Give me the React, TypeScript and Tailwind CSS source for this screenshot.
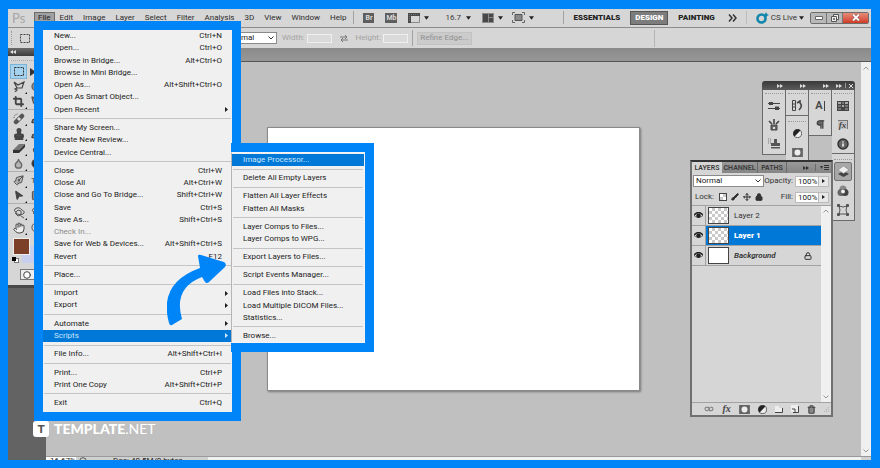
import { type ReactNode } from "react";
import {
  Brush,
  Circle,
  Crop,
  Droplet,
  Hand,
  Info,
  Link,
  Lock,
  MousePointer2,
  Move,
  PenTool,
  Pilcrow,
  Stamp,
  StickyNote,
  Trash2,
} from "lucide-react";

type Entry = { label: string; keys?: string; sub?: boolean; off?: boolean; on?: boolean } | null;

const fileMenu: Entry[] = [
  { label: "New...", keys: "Ctrl+N" },
  { label: "Open...", keys: "Ctrl+O" },
  { label: "Browse in Bridge...", keys: "Alt+Ctrl+O" },
  { label: "Browse in Mini Bridge..." },
  { label: "Open As...", keys: "Alt+Shift+Ctrl+O" },
  { label: "Open As Smart Object..." },
  { label: "Open Recent", sub: true },
  null,
  { label: "Share My Screen..." },
  { label: "Create New Review..." },
  { label: "Device Central..." },
  null,
  { label: "Close", keys: "Ctrl+W" },
  { label: "Close All", keys: "Alt+Ctrl+W" },
  { label: "Close and Go To Bridge...", keys: "Shift+Ctrl+W" },
  { label: "Save", keys: "Ctrl+S" },
  { label: "Save As...", keys: "Shift+Ctrl+S" },
  { label: "Check In...", off: true },
  { label: "Save for Web & Devices...", keys: "Alt+Shift+Ctrl+S" },
  { label: "Revert", keys: "F12" },
  null,
  { label: "Place..." },
  null,
  { label: "Import", sub: true },
  { label: "Export", sub: true },
  null,
  { label: "Automate", sub: true },
  { label: "Scripts", sub: true, on: true },
  null,
  { label: "File Info...", keys: "Alt+Shift+Ctrl+I" },
  null,
  { label: "Print...", keys: "Ctrl+P" },
  { label: "Print One Copy", keys: "Alt+Shift+Ctrl+P" },
  null,
  { label: "Exit", keys: "Ctrl+Q" },
];

const scriptsMenu: Entry[] = [
  { label: "Image Processor...", on: true },
  null,
  { label: "Delete All Empty Layers" },
  null,
  { label: "Flatten All Layer Effects" },
  { label: "Flatten All Masks" },
  null,
  { label: "Layer Comps to Files..." },
  { label: "Layer Comps to WPG..." },
  null,
  { label: "Export Layers to Files..." },
  null,
  { label: "Script Events Manager..." },
  null,
  { label: "Load Files into Stack..." },
  { label: "Load Multiple DICOM Files..." },
  { label: "Statistics..." },
  null,
  { label: "Browse..." },
];

function Menu({ items, name }: { items: Entry[]; name: string }) {
  return (
    <div role="menu" aria-label={name} className="flex min-h-0 flex-1 flex-col">
      {items.map((item, i) =>
        item ? (
          <button
            key={i}
            role="menuitem"
            disabled={item.off}
            className={`flex min-h-0 w-full flex-1 items-center justify-between pr-[10px] pl-[11px] text-left leading-[12px] ${
              item.on ? "bg-[#0078d7] text-[#cfe6fb]" : item.off ? "text-[#8a8a8a]" : "text-[#1c1c1c]"
            }`}
          >
            <span>{item.label}</span>
            {item.keys && <span>{item.keys}</span>}
            {item.sub && (
              <svg viewBox="0 0 3 5" className="-mr-[6px] h-[5px] w-[3px]" fill="currentColor">
                <path d="M0 0L3 2.500L0 5Z" />
              </svg>
            )}
          </button>
        ) : (
          <div key={i} role="separator" className="flex h-[6px] shrink-0 items-center px-px">
            <div className="h-px w-full bg-[#c4c4c4]" />
          </div>
        ),
      )}
    </div>
  );
}

function Down() {
  return (
    <svg viewBox="0 0 6 4" className="h-[4px] w-[5px] shrink-0" fill="#222">
      <path d="M0 0H6L3 4Z" />
    </svg>
  );
}

function Fast({ className = "" }: { className?: string }) {
  return (
    <svg viewBox="0 0 6 4" className={`h-[4px] w-[6px] shrink-0 ${className}`} fill="currentColor">
      <path d="M0 0L3 2L0 4ZM3 0L6 2L3 4Z" />
    </svg>
  );
}

function Chevron({ up = false }: { up?: boolean }) {
  return (
    <svg viewBox="0 0 6 4" className="h-[4px] w-[6px] shrink-0" fill="none" stroke="currentColor">
      <path d={up ? "M.5 3.5L3 1L5.5 3.5" : "M.5 .5L3 3L5.5 .5"} />
    </svg>
  );
}

function Rule() {
  return <div className="h-[13px] w-px shrink-0 bg-[#a2a2a2]" />;
}

function MenuBar() {
  const names = ["Edit", "Image", "Layer", "Select", "Filter", "Analysis", "3D", "View", "Window", "Help"];
  return (
    <header className="flex h-[19px] shrink-0 items-center border-b border-[#8c8c8c] bg-[#d6d6d6] pr-[2px] pb-px pl-[4px] leading-[10px] whitespace-nowrap">
      <div className="w-[22px] font-[Lato,sans-serif] text-[13px] leading-[14px] text-[#a6a6a6]">Ps</div>
      <nav className="flex items-center">
        <button className="h-[12px] border border-[#6c6c6c] bg-[#a0a0a0] px-[3px] text-[#222]">File</button>
        {names.map((n) => (
          <button key={n} className="h-[12px] px-[5px] text-[#2c2c2c]">
            {n}
          </button>
        ))}
      </nav>
      <div className="ml-[2px] flex items-center">
        <Rule />
        <button className="ml-[9px] h-[10px] w-[11px] bg-[#5e5e5e] text-center text-[7px] font-bold text-[#d8d8d8]">Br</button>
        <button className="ml-[11px] h-[10px] w-[12px] bg-[#5e5e5e] text-center text-[7px] font-bold text-[#d8d8d8]">Mb</button>
        <button aria-label="View extras" className="ml-[11px] flex items-center gap-[4px]">
          <svg viewBox="0 0 12 10" className="h-[10px] w-[12px]">
            <path d="M0 0H12V3H3V10H0Z" fill="#4a4a4a" />
            <path d="M3 9.5H11.500V3" fill="none" stroke="#8a8a8a" />
            <path d="M1 1.500H11M1.500 3V9" stroke="#777" strokeDasharray="1 1" />
          </svg>
          <Down />
        </button>
        <button className="ml-[16px] flex items-center gap-[5px] text-[#3a3a3a]">
          16.7 <Down />
        </button>
        <button aria-label="Arrange documents" className="ml-[11px] flex items-center gap-[4px]">
          <svg viewBox="0 0 12 10" className="h-[10px] w-[12px]">
            <path d="M0 0H12V10H0Z" fill="#8a8a8a" />
            <path d="M1 1H6V9H1ZM7 1H11V4H7ZM7 5H11V9H7Z" fill="#484848" />
          </svg>
          <Down />
        </button>
        <button aria-label="Screen mode" className="ml-[9px] flex items-center gap-[4px]">
          <svg viewBox="0 0 13 11" className="h-[11px] w-[13px]">
            <path d="M3 2.500H10V8.500H3Z" fill="#8a8a8a" stroke="#555" />
            <path d="M.5 3V.5H3M10 .5H12.500V3M.5 8V10.500H3M10 10.500H12.500V8" fill="none" stroke="#666" />
          </svg>
          <Down />
        </button>
      </div>
      <div className="ml-auto flex items-center">
        <Rule />
        <button className="ml-[10px] font-black text-[#222]">ESSENTIALS</button>
        <button className="mx-[10px] h-[14px] w-[38px] border border-[#555] bg-[#7c7c7c] font-black text-white">
          DESIGN
        </button>
        <button className="font-black text-[#222]">PAINTING</button>
        <svg viewBox="0 0 9 8" className="ml-[13px] h-[8px] w-[9px]" fill="none" stroke="#333" strokeWidth="1.500">
          <path d="M1 .5L4 4L1 7.500M5 .5L8 4L5 7.500" />
        </svg>
        <div className="ml-[9px] h-[13px] w-px bg-[#bdbdbd]" />
        <button className="ml-[9px] flex items-center gap-[2px] text-[#333]">
          <svg viewBox="0 0 13 12" className="h-[12px] w-[13px]">
            <circle cx="5.500" cy="6.500" r="4" fill="none" stroke="#1287ab" strokeWidth="2.600" />
            <path d="M10 0L11 2L13 3L11 4L10 6L9 4L7 3L9 2Z" fill="#1287ab" />
          </svg>
          CS Live
          <Down />
        </button>
        <div className="ml-[6px] flex h-[12px] overflow-hidden rounded-[2px] border border-[#6d6d6d]">
          <button aria-label="Minimize" className="flex w-[16px] items-center justify-center border-r border-[#777] bg-[#b8b8b8]">
            <svg viewBox="0 0 8 4" className="h-[4px] w-[8px]">
              <path d="M.5 .5H7.500V3.500H.5Z" fill="#fff" stroke="#666" />
            </svg>
          </button>
          <button aria-label="Restore" className="flex w-[16px] items-center justify-center border-r border-[#777] bg-[#b8b8b8]">
            <svg viewBox="0 0 8 8" className="h-[8px] w-[8px]" fill="#eee" stroke="#555">
              <path d="M2.500 .5H7.500V5.500H2.500Z" />
              <path d="M.5 2.500H5.500V7.500H.5Z" />
              <path d="M2.500 4.500H3.500V5.500H2.500Z" />
            </svg>
          </button>
          <button aria-label="Close window" className="flex w-[25px] items-center justify-center bg-linear-to-b from-[#e58a7a] to-[#cf3a22]">
            <svg viewBox="0 0 8 7" className="h-[7px] w-[8px]" fill="none">
              <path d="M1 .5L7 6.500M7 .5L1 6.500" stroke="#7c3a33" strokeWidth="3" />
              <path d="M1 .5L7 6.500M7 .5L1 6.500" stroke="#fff" strokeWidth="2" />
            </svg>
          </button>
        </div>
      </div>
    </header>
  );
}

function OptionsBar() {
  return (
    <div className="flex h-[20px] shrink-0 items-center bg-[#d6d6d6] text-[#a3a3a3]">
      <div className="ml-[3px] h-[14px] border-l border-dotted border-[#999]" />
      <button aria-label="Rectangular marquee" className="ml-[8px]">
        <svg viewBox="0 0 10 9" className="h-[9px] w-[10px]" fill="none" stroke="#444" strokeDasharray="2 1">
          <path d="M.5 .5H9.500V8.500H.5Z" />
        </svg>
      </button>
      <div className="relative ml-[195px] h-[12px] w-[52px]">
        <select aria-label="Style" className="block h-full w-full appearance-none border border-[#8a8a8a] bg-white pl-[2px] leading-[10px] text-[#222]">
          <option>Normal</option>
        </select>
        <div className="pointer-events-none absolute top-[4px] right-[3px] text-[#333]">
          <Chevron />
        </div>
      </div>
      <label className="ml-[5px] flex items-center gap-[2px]">
        Width:
        <input disabled className="h-[9px] w-[25px] border border-[#efefef] bg-[#dadada]" />
      </label>
      <svg viewBox="0 0 8 7" className="mx-[8px] h-[7px] w-[8px]" fill="none" stroke="#777">
        <path d="M0 2H7M5 0L7 2L5 4M8 5H1M3 3L1 5L3 7" />
      </svg>
      <label className="flex items-center gap-[2px]">
        Height:
        <input disabled className="h-[9px] w-[25px] border border-[#efefef] bg-[#dadada]" />
      </label>
      <div className="ml-[4px] h-[16px] w-px bg-[#a2a2a2]" />
      <button disabled className="ml-[4px] h-[13px] w-[55px] border border-[#c2c2c2] bg-[#cbcbcb] leading-[10px] text-[#909090]">
        Refine Edge...
      </button>
      <div className="mr-[216px] ml-auto h-[17px] w-px bg-[#b4b4b4]" />
    </div>
  );
}

const ic = "size-[11px] fill-[#8a8a8a]";

const lasso = (
  <svg viewBox="0 0 12 11" className="h-[11px] w-[12px]" fill="none" stroke="#444" strokeWidth="1.200">
    <path d="M1 1L5 4L11 1L9 7H4L1 1M4 7L2 8L4 9L2 11" />
  </svg>
);
const heal = (
  <svg viewBox="0 0 12 12" className="h-[12px] w-[12px]">
    <path d="M3 9L9 3" stroke="#555" strokeWidth="4.500" strokeLinecap="round" />
    <path d="M5 7L7 5" stroke="#ddd" strokeWidth="3" />
    <path d="M1 5Q1 1 5 1" stroke="#555" fill="none" strokeDasharray="1 1" />
  </svg>
);
const eraser = (
  <svg viewBox="0 0 12 9" className="h-[9px] w-[12px]">
    <path d="M0 6L6 0H12L6 6Z" fill="#777" />
    <path d="M0 6H6V9H0ZM6 6L12 0V3L6 9Z" fill="#333" />
  </svg>
);
const orbit = (
  <svg viewBox="0 0 12 12" className="h-[12px] w-[12px]" fill="none" stroke="#555">
    <path d="M3 5Q0 4 2 2Q6 -1 9 3Q13 5 10 7Q6 9 2 6M5 3L8 4V8L5 9L3 7V5ZM8 9L11 11" />
  </svg>
);

const tools: { name: string; icon: ReactNode; second: ReactNode; rule?: boolean }[] = [
  { name: "Lasso", icon: lasso, second: <Circle className={ic} /> },
  { name: "Crop", icon: <Crop className="size-[11px]" strokeWidth={4} />, second: <PenTool className={ic} />, rule: true },
  { name: "Healing brush", icon: heal, second: <Brush className={ic} strokeWidth={3} /> },
  { name: "Clone stamp", icon: <Stamp className="size-[12px] fill-[#555]" strokeWidth={4} />, second: <Brush className={ic} strokeWidth={3} /> },
  { name: "Eraser", icon: eraser, second: <Droplet className={ic} /> },
  { name: "Blur", icon: <Droplet className="size-[11px] fill-[#b4b4b4] text-[#666]" strokeWidth={3} />, second: <Circle className="size-[11px] fill-[#333]" />, rule: true },
  { name: "Pen", icon: <PenTool className="size-[11px] rotate-90 fill-[#c4c4c4]" strokeWidth={2} />, second: <span>T</span> },
  { name: "Path selection", icon: <MousePointer2 className="size-[11px] rotate-12 fill-[#444]" />, second: <StickyNote className={ic} />, rule: true },
  { name: "3D rotate", icon: orbit, second: orbit },
  { name: "Hand", icon: <Hand className="size-[12px] fill-[#eee]" strokeWidth={2} />, second: <Circle className="size-[11px]" /> },
];

function Toolbox() {
  return (
    <aside className="w-[38px] shrink-0 bg-[#636363]">
      <div className="flex h-[8px] items-center bg-linear-to-b from-[#6a6a6a] to-[#3c3c3c] pl-[2px] text-[#e0e0e0]">
        <Fast className="rotate-180" />
      </div>
      <div className="bg-[#d6d6d6] pb-[5px] text-[#444]">
        <div className="ml-[3px] h-[5px] border-b border-dotted border-[#aaa]" />
        <div className="mt-[3px] flex items-center gap-[3px] pl-[2px]">
          <button aria-label="Marquee" className="flex h-[15px] w-[17px] items-center justify-center border border-[#7db4d6] bg-[#a5d2ee]">
            <svg viewBox="0 0 10 9" className="h-[9px] w-[10px]" fill="none" stroke="#333" strokeDasharray="2 1">
              <path d="M.5 .5H9.500V8.500H.5Z" />
            </svg>
          </button>
          <svg viewBox="0 0 6 8" className="h-[8px] w-[6px]" fill="#333">
            <path d="M0 0L6 4L0 8Z" />
          </svg>
        </div>
        {tools.map((t) => (
          <div key={t.name} className={t.rule ? "mb-px border-b border-[#b0b0b0]" : ""}>
            <div className="flex h-[15px] items-center gap-[6px] pl-[4px]">
              <button aria-label={t.name} className="relative flex h-[14px] w-[13px] shrink-0 items-center justify-center">
                {t.icon}
                <svg viewBox="0 0 2 2" className="absolute right-[-2px] bottom-0 size-[2px]">
                  <path d="M2 0V2H0Z" fill="#111" />
                </svg>
              </button>
              {t.second}
            </div>
          </div>
        ))}
        <div className="relative mt-[3px] h-[27px]">
          <div className="absolute top-[8px] left-[14px] h-[17px] w-[17px] bg-[#c6d0ee]" />
          <div className="absolute top-0 left-[5px] h-[17px] w-[17px] border border-[#eee] bg-[#7c4029]" />
          <div className="absolute top-[20px] left-[6px] h-[5px] w-[5px] border border-[#777] bg-white" />
          <div className="absolute top-[19px] left-[4px] h-[4px] w-[4px] bg-black" />
        </div>
        <button aria-label="Quick mask" className="mt-[4px] ml-[12px] flex h-[11px] w-[22px] items-center border border-[#777] bg-[#eee] pl-[2px]">
          <Circle className="size-[8px] fill-white" strokeWidth={3} />
        </button>
      </div>
      <div className="h-[3px] bg-[#484848]" />
    </aside>
  );
}

const brushes = (
  <svg viewBox="0 0 12 10" className="h-[10px] w-[12px]" stroke="#444" fill="#444">
    <path d="M0 2.500H12M0 7.500H12" strokeWidth="1.200" />
    <path d="M1 1H5V4H1ZM7 5.500H11V9H7Z" stroke="none" />
  </svg>
);
const pots = (
  <svg viewBox="0 0 12 12" className="h-[12px] w-[12px]" stroke="#444" fill="none">
    <path d="M3 6H9V11H3Z" fill="#666" />
    <path d="M4 5L1 2M6 5V0M8 5L11 2" strokeWidth="1.600" />
    <path d="M5 8H7V10H5Z" fill="#ddd" stroke="none" />
  </svg>
);
const clone = (
  <svg viewBox="0 0 12 11" className="h-[11px] w-[12px]">
    <path d="M0 1H4M0 3H4M0 5H4" stroke="#777" strokeDasharray="1 1" />
    <path d="M6 1H9V5H12V8H3V5H6ZM3 9H12V10.500H3Z" fill="#555" />
  </svg>
);
const history = (
  <svg viewBox="0 0 12 11" className="h-[11px] w-[12px]" fill="none" stroke="#444">
    <path d="M1.500 .5H4.500V10.500H1.500ZM1.500 4H4.500M1.500 7H4.500" />
    <path d="M6 3L9 1V3Q12 6 8 10" strokeWidth="1.600" />
  </svg>
);
const charIcon = <span className="border-r border-[#444] pr-px text-[11px] leading-[10px] font-semibold">A</span>;
const swatches = (
  <svg viewBox="0 0 12 10" className="h-[10px] w-[12px]">
    <path d="M0 0H12V10H0Z" fill="#444" />
    <path d="M1 1H4V3H1ZM5 4H7V6H5ZM8 1H11V3H8Z" fill="#aaa" />
    <path d="M5 1H7V3H5ZM1 4H4V6H1ZM8 4H11V6H8ZM1 7H4V9H1ZM8 7H11V9H8Z" fill="#777" />
  </svg>
);
const styles = (
  <span className="border-t border-r border-[#777] bg-[#c4c4c4] px-px font-[Liberation_Serif,serif] text-[9px] leading-[8px] font-bold italic">fx</span>
);
const mask = (
  <svg viewBox="0 0 12 10" className="h-[9px] w-[11px]">
    <path d="M0 0H12V10H0Z" fill="#666" />
    <circle cx="6" cy="5" r="3.300" fill="#eee" />
  </svg>
);
const halfDisc = (
  <svg viewBox="0 0 10 10" className="size-[9px]">
    <circle cx="5" cy="5" r="4.500" fill="#eee" stroke="#555" />
    <path d="M8.200 1.800A4.500 4.500 0 0 0 1.800 8.200Z" fill="#222" />
  </svg>
);
const layersIcon = (
  <svg viewBox="0 0 13 13" className="h-[13px] w-[13px]">
    <path d="M1 9L6.500 6L12 9L6.500 12Z" fill="#444" />
    <path d="M1 5L6.500 1L12 5L6.500 8.500Z" fill="#eee" stroke="#777" strokeWidth=".5" />
  </svg>
);
const channels = (
  <svg viewBox="0 0 12 12" className="h-[12px] w-[12px]">
    <circle cx="6" cy="4" r="3.500" fill="#888" />
    <circle cx="4" cy="7.500" r="3.500" fill="#666" />
    <circle cx="8" cy="7.500" r="3.500" fill="#444" />
    <circle cx="6" cy="6.500" r="2" fill="#eee" />
  </svg>
);
const paths = (
  <svg viewBox="0 0 12 12" className="h-[12px] w-[12px]" stroke="#555" fill="none">
    <path d="M2 2Q6 4 10 2Q8 6 10 10M2 10Q4 6 2 2M3 10H9" />
    <path d="M.5 .5H2.500V2.500H.5ZM9.500 .5H11.500V2.500H9.500ZM.5 9.500H2.500V11.500H.5ZM9.500 9.500H11.500V11.500H9.500Z" fill="#555" />
  </svg>
);

type DockItem = { name: string; icon: ReactNode; active?: boolean };

const dock: DockItem[][][] = [
  [[{ name: "Brush presets", icon: brushes }, { name: "Brushes", icon: pots }, { name: "Clone source", icon: clone }]],
  [
    [{ name: "History", icon: history }],
    [
      { name: "Adjustments", icon: halfDisc },
      { name: "Masks", icon: mask },
    ],
  ],
  [[{ name: "Character", icon: charIcon }, { name: "Paragraph", icon: <Pilcrow className="size-[11px] fill-[#666]" strokeWidth={3} /> }]],
  [
    [
      { name: "Swatches", icon: swatches },
      { name: "Styles", icon: styles },
      { name: "Info", icon: <Info className="size-[12px] fill-[#666] text-[#333] [&>path]:stroke-white" strokeWidth={3} /> },
    ],
    [
      { name: "Layers panel", icon: layersIcon, active: true },
      { name: "Channels panel", icon: channels },
      { name: "Paths panel", icon: paths },
    ],
  ],
];

function Dock() {
  return (
    <div className="absolute top-[19px] right-[6px] w-[93px] text-[#444]">
      <div className="flex h-[9px] items-center rounded-t-[3px] bg-linear-to-b from-[#3a3a3a] to-[#5c5c5c] text-[#ddd]">
        <div className="flex w-[23px] justify-end pr-[2px]"><Fast /></div>
        <div className="flex w-[23px] justify-end pr-[2px]"><Fast /></div>
        <div className="flex w-[23px] justify-end pr-[2px]"><Fast /></div>
        <div className="flex flex-1 items-center justify-end gap-[3px] pr-[2px]">
          <Fast />
          <span className="h-[5px] w-px bg-[#999]" />
          <svg viewBox="0 0 4 4" className="size-[4px]" stroke="currentColor"><path d="M0 0L4 4M4 0L0 4" /></svg>
        </div>
      </div>
      <div className="flex items-start">
        {dock.map((column, c) => (
          <div key={c} className={`min-w-0 flex-1 border-r border-b border-[#6a6a6a] bg-[#d6d6d6] pb-px ${c ? "" : "border-l"}`}>
            {column.map((group, g) => (
              <div key={g} className={g ? "border-t border-[#6a6a6a] pt-[2px]" : ""}>
                <div className="mx-[2px] h-[4px] border-b border-dotted border-[#999]" />
                <div className="flex flex-col items-center pt-[2px]">
                  {group.map((d) => (
                    <button
                      key={d.name}
                      aria-label={d.name}
                      className={`flex h-[19px] w-[18px] items-center justify-center ${
                        d.active ? "rounded-[2px] border border-[#6f6f6f] bg-[#a8a8a8]" : ""
                      }`}
                    >
                      {d.icon}
                    </button>
                  ))}
                </div>
              </div>
            ))}
          </div>
        ))}
      </div>
    </div>
  );
}

function Eye() {
  return (
    <svg viewBox="0 0 9 7" className="h-[7px] w-[9px]">
      <path d="M0 3.500Q4.500 -2 9 3.500Q4.500 7 0 3.500Z" fill="#ddd" stroke="#555" strokeWidth=".8" />
      <path d="M0 3Q4.500 -2 9 3" fill="none" stroke="#222" strokeWidth="1.400" />
      <circle cx="4.500" cy="3.800" r="2.300" fill="#222" />
    </svg>
  );
}

const checker = "bg-[repeating-conic-gradient(#c9c9c9_0_25%,#fff_0_50%)] bg-[length:6px_6px]";

function Percent({ label }: { label: string }) {
  return (
    <label className="flex items-center gap-[2px]">
      {label}
      <span className="flex">
        <input defaultValue="100%" className="h-[11px] w-[24px] border border-[#bbb] bg-white pl-[2px] text-[#222]" />
        <span className="flex h-[11px] w-[10px] items-center justify-center border border-l-0 border-[#bbb] bg-[#e8e8e8]">
          <svg viewBox="0 0 3 4" className="h-[4px] w-[3px]" fill="#222"><path d="M0 0L3 2L0 4Z" /></svg>
        </span>
      </span>
    </label>
  );
}

function LayersPanel() {
  const rows = [
    { name: "Layer 2", thumb: checker, row: "", text: "" },
    { name: "Layer 1", thumb: checker, row: "bg-[#0078d7]", text: "font-black text-white" },
    { name: "Background", thumb: "bg-white", row: "", text: "italic font-semibold" },
  ];
  return (
    <section className="absolute top-[98px] right-[28px] flex h-[257px] w-[143px] flex-col border-[2px] border-[#707070] border-t-[#333] bg-[#d6d6d6] leading-[10px] text-[#333]">
      <div className="flex h-[11px] shrink-0 items-center bg-linear-to-b from-[#999] to-[#858585] text-[7px] font-semibold text-[#3a3a3a]">
        <button className="h-full w-[30px] bg-[#d6d6d6]">LAYERS</button>
        <button className="h-full w-[36px] border-r border-[#6a6a6a]">CHANNEL</button>
        <button className="h-full w-[29px] border-r border-[#6a6a6a]">PATHS</button>
        <Fast className="mr-[6px] ml-auto text-[#333]" />
        <span className="mr-[4px] h-[7px] w-px bg-[#6a6a6a]" />
        <svg viewBox="0 0 9 5" className="mr-[2px] h-[5px] w-[9px]">
          <path d="M0 1H3L1.500 4Z" fill="#333" />
          <path d="M4 .5H9M4 2.500H9M4 4.500H9" stroke="#333" />
        </svg>
      </div>
      <div className="flex h-[16px] shrink-0 items-center justify-between pr-[2px] pl-px">
        <div className="relative h-[12px] w-[74px]">
          <select aria-label="Blend mode" className="block h-full w-full appearance-none border border-[#8a8a8a] bg-white pl-[2px] leading-[10px] text-[#222]">
            <option>Normal</option>
          </select>
          <div className="pointer-events-none absolute top-[4px] right-[3px]"><Chevron /></div>
        </div>
        <Percent label="Opacity:" />
      </div>
      <div className="flex h-[16px] shrink-0 items-center pr-[2px] pl-[3px]">
        <span className="mr-[5px]">Lock:</span>
        <div className="flex items-center gap-[4px]">
          <button aria-label="Lock transparency" className={`size-[8px] border border-[#444] ${checker}`} />
          <button aria-label="Lock pixels"><Brush className="size-[8px] fill-[#333]" strokeWidth={3} /></button>
          <button aria-label="Lock position"><Move className="size-[8px]" strokeWidth={3} /></button>
          <button aria-label="Lock all"><Lock className="size-[8px] fill-[#333]" strokeWidth={3} /></button>
        </div>
        <div className="ml-auto"><Percent label="Fill:" /></div>
      </div>
      <div className="flex flex-1 border-y border-[#a2a2a2]">
        <ul className="flex-1">
          {rows.map((r) => (
            <li key={r.name} className="flex h-[20px] items-stretch border-b border-[#a2a2a2]">
              <button aria-label={`Show ${r.name}`} className="flex w-[14px] items-center justify-center border-r border-[#a2a2a2]">
                <Eye />
              </button>
              <div className={`flex flex-1 items-center gap-[5px] pl-[2px] ${r.row}`}>
                <div className={`h-[17px] w-[21px] border border-[#444] ${r.thumb}`} />
                <span className={r.text}>{r.name}</span>
                {r.name === "Background" && <Lock className="mr-[9px] ml-auto size-[8px]" strokeWidth={3} />}
              </div>
            </li>
          ))}
        </ul>
        <div className="flex w-[10px] flex-col items-center justify-between bg-[#f0f0f0] py-[3px] text-[#999]">
          <Chevron up />
          <Chevron />
        </div>
      </div>
      <div className="flex h-[12px] shrink-0 items-center gap-[8px] pl-[12px] text-[#444]">
        <button aria-label="Link layers"><Link className="h-[8px] w-[10px] rotate-45 text-[#777]" strokeWidth={3} /></button>
        <button aria-label="Layer style" className="w-[10px] font-[Liberation_Serif,serif] text-[10px] font-bold italic">fx</button>
        <button aria-label="Add mask">{mask}</button>
        <button aria-label="Adjustment layer">{halfDisc}</button>
        <button aria-label="New group">
          <svg viewBox="0 0 8 7" className="h-[7px] w-[8px]">
            <path d="M0 0H4V2H8V7H0Z" fill="#eee" />
            <path d="M0 6.500H7.500V2" fill="none" stroke="#444" />
          </svg>
        </button>
        <button aria-label="New layer">
          <svg viewBox="0 0 8 8" className="size-[8px]">
            <path d="M0 0H7V7H0Z" fill="#eee" />
            <path d="M2 7.500H7.500V1M1 4H4V8" fill="none" stroke="#444" />
          </svg>
        </button>
        <button aria-label="Delete layer"><Trash2 className="size-[9px] fill-[#888]" strokeWidth={3} /></button>
        <svg viewBox="0 0 6 6" className="mr-px ml-auto size-[6px]" stroke="#aaa" strokeDasharray="1 1">
          <path d="M0 5.500H6M2 3.500H6M4 1.500H6" />
        </svg>
      </div>
    </section>
  );
}

export default function App() {
  return (
    <div className="relative flex h-screen min-h-[468px] flex-col overflow-hidden bg-[#0085f8] pt-[9px] pr-[9px] pb-[8px] pl-[8px] font-[Roboto,Open_Sans,sans-serif] text-[8px]">
      <MenuBar />
      <OptionsBar />
      <div className="flex min-h-0 flex-1">
        <Toolbox />
        <main className="flex min-w-0 flex-1 flex-col">
          <div className="h-[14px] shrink-0 border-b border-[#555] bg-linear-to-b from-[#8a8a8a] to-[#979797]" />
          <div className="flex min-h-0 flex-1">
            <div className="relative min-w-0 flex-1 bg-[#c0c0c0] pt-[65px] pr-[221px] pb-[65px] pl-[221px]">
              <div className="h-full border border-[#8a8a8a] bg-white shadow-[1px_1px_2px_#777]" />
              <Dock />
              <LayersPanel />
            </div>
            <div className="flex w-[10px] shrink-0 flex-col items-center justify-between bg-[#f0f0f0] pt-[4px] pb-[3px] text-[#999]">
              <Chevron up />
              <Chevron />
            </div>
          </div>
          <footer className="flex h-[4px] shrink-0 items-start overflow-hidden border-t border-[#999] bg-[#d0d0d0] leading-[8px] text-[#222]">
            <span className="w-[30px] bg-white pl-[4px]">16.67%</span>
            <Circle className="ml-[3px] size-[8px]" />
            <span className="ml-[26px]">Doc: 40.5M/0 bytes</span>
            <span className="mr-[10px] ml-auto h-full w-[calc(100%-172px)] bg-[#f0f0f0]" />
          </footer>
        </main>
      </div>

      <div className="absolute top-[21px] left-[34px] flex h-[400px] w-[207px] flex-col border-[9px] border-[#0085f8] bg-[#f0f0f0] pb-[3px]">
        <Menu items={fileMenu} name="File" />
      </div>
      <div className="absolute top-[143px] left-[231px] flex h-[209px] w-[143px] border-y-[9px] border-r-[9px] border-[#0085f8]">
        <div className="flex flex-1 border border-[#f4f4f4] border-l-[#b5b5b5] bg-[#f0f0f0] pt-px">
          <Menu items={scriptsMenu} name="Scripts" />
        </div>
      </div>
      <svg viewBox="0 0 60 72" className="pointer-events-none absolute top-[254px] left-[167px] h-[72px] w-[60px]" fill="#0085f8">
        <path d="M31 2Q31 0 34 1L57 8Q60 10 58 13L42 28Q40 30 38 28L35 23Q6 34 15 65L5 71Q3 72 2 69Q-9 29 33 14Z" />
      </svg>
      <div className="absolute top-[421px] left-[33px] flex items-center gap-[5px] font-[Lato,sans-serif] text-[14px] leading-[16px] text-white">
        <span className="flex h-[16px] w-[16px] items-center justify-center rounded-[3px] bg-white text-[12px] font-black text-[#555]">T</span>
        <span>
          <b className="font-black">TEMPLATE</b>
          <span>.NET</span>
        </span>
      </div>
    </div>
  );
}
